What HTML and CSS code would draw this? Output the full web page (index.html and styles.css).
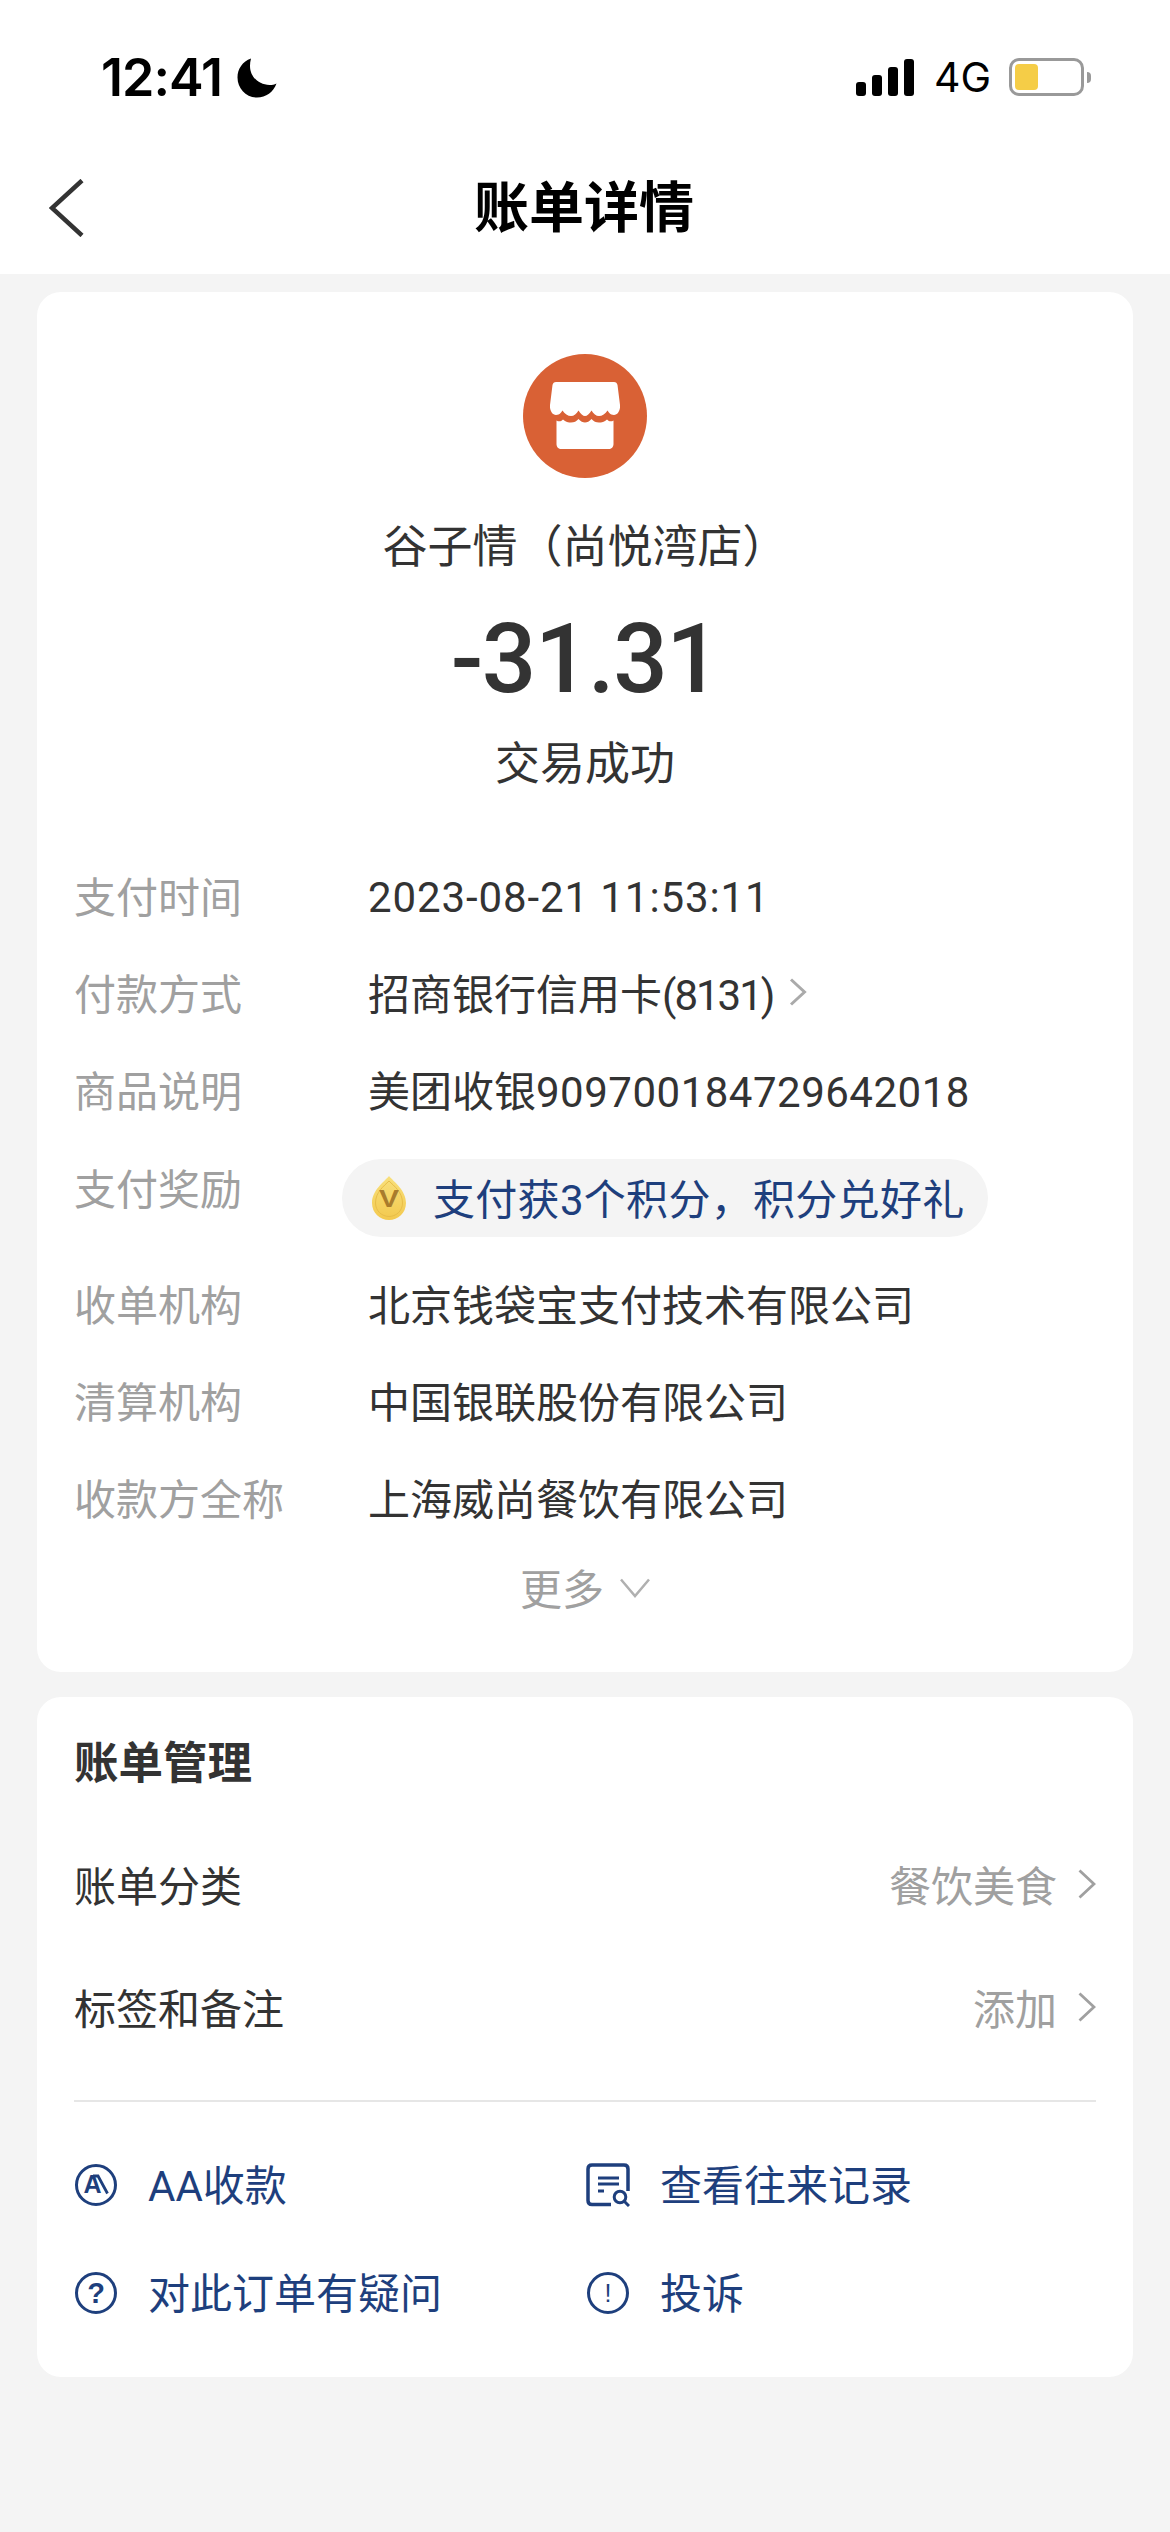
FILE: index.html
```html
<!DOCTYPE html>
<html>

<head>
  <meta charset="UTF-8">
  <meta name="viewport" content="width=device-width, initial-scale=1">
  <title>账单详情</title>

  <link rel="stylesheet" href="styles.css">
</head>

<body>

  <header class="top">
    <div class="status-bar">
      <div class="status-left">
        <span class="clock">12:41</span>
        <svg class="moon" width="40" height="40" viewBox="0 0 40 40">
          <path d="M14 0.5C5.5 3.5 0.5 11 0.5 19.5C0.5 30.5 9 39.5 20 39.5C29 39.5 36.5 34 39.5 25.5C37.5 26.5 35 27 32.5 27C21.5 27 13 18.5 13 8C13 5.5 13.3 3 14 0.5Z" fill="#000" />
        </svg>
      </div>
      <div class="status-right">
        <div class="signal">
          <span class="bar bar-1"></span>
          <span class="bar bar-2"></span>
          <span class="bar bar-3"></span>
          <span class="bar bar-4"></span>
        </div>
        <span class="network">4G</span>
        <div class="battery">
          <div class="battery-level"></div>
        </div>
        <div class="battery-nub"></div>
      </div>
    </div>
    <div class="nav-bar">
      <svg class="back" width="36" height="58" viewBox="0 0 36 58">
        <path d="M33 1.500L3 29L33 56.500" fill="none" stroke="#333" stroke-width="4.500" />
      </svg>
      <h1 class="nav-title">账单详情</h1>
    </div>
  </header>

  <main class="page">
    <section class="card card-detail">
      <div class="store-logo">
        <svg width="70" height="70" viewBox="0 0 70 70">
          <path d="M6 1H64C66 1 67 2 67.500 4L70 24C70.500 29 68 34 64 34C60 34 58.500 31 57.500 29.500C55.500 33 52 35 49 35C46 35 43.500 33 41.500 29.500C39.500 33 37 35 35 35C33 35 30.500 33 28.500 29.500C26.500 33 24 35 21 35C18 35 14.500 33 12.500 29.500C11.500 31 10 34 6 34C2 34 -0.500 29 0 24L2.500 4C3 2 4 1 6 1Z" fill="#fff" />
          <path d="M6.500 39.500C9 41 11 40.500 13 38.500C15.500 41 18.500 41.500 21 41.500C24 41.500 26.500 40.500 28.500 38C30.500 40.500 33 41.500 35 41.500C37 41.500 39.500 40.500 41.500 38C43.500 40.500 46 41.500 49 41.500C51.500 41.500 54.500 41 57 38.500C59 40.500 61 41 63.500 39.500V63C63.500 66 61.500 68 58.500 68H11.500C8.500 68 6.500 66 6.500 63Z" fill="#fff" />
        </svg>
      </div>
      <div class="store-name">谷子情（尚悦湾店）</div>
      <div class="amount">-31.31</div>
      <div class="trade-status">交易成功</div>

      <div class="rows">
        <div class="row">
          <span class="row-label">支付时间</span>
          <span class="row-value row-date">2023-08-21 11:53:11</span>
        </div>
        <div class="row">
          <span class="row-label">付款方式</span>
          <span class="row-value">招商银行信用卡<span class="card-no">(8131)</span></span>
          <svg class="chev-small" width="18" height="28" viewBox="0 0 18 28">
            <path d="M2 1.500L15.500 14L2 26.500" fill="none" stroke="#aaa" stroke-width="3" />
          </svg>
        </div>
        <div class="row">
          <span class="row-label">商品说明</span>
          <span class="row-value">美团收银<span class="order-no">909700184729642018</span></span>
        </div>
        <div class="row row-reward">
          <span class="row-label">支付奖励</span>
          <div class="reward-pill">
            <svg class="coin" width="34" height="44" viewBox="0 0 34 44">
              <defs>
                <linearGradient id="coin-fill" x1="0" y1="0" x2="0" y2="1">
                  <stop offset="0" stop-color="#f8e07c" />
                  <stop offset="1" stop-color="#f3c94e" />
                </linearGradient>
              </defs>
              <path d="M17 0C22 6 34 14 34 27C34 37 26 44 17 44C8 44 0 37 0 27C0 14 12 6 17 0Z" fill="url(#coin-fill)" />
              <path d="M17 5C22 10 30.500 16 30.500 27C30.500 35 24 40.500 17 40.500C10 40.500 3.500 35 3.500 27C3.500 16 12 10 17 5Z" fill="none" stroke="#e8bd48" stroke-width="1" />
              <text class="coin-v" x="17" y="31" text-anchor="middle" textLength="20" lengthAdjust="spacingAndGlyphs">V</text>
            </svg>
            <span class="reward-text">支付获3个积分，积分兑好礼</span>
          </div>
        </div>
        <div class="row">
          <span class="row-label">收单机构</span>
          <span class="row-value">北京钱袋宝支付技术有限公司</span>
        </div>
        <div class="row">
          <span class="row-label">清算机构</span>
          <span class="row-value">中国银联股份有限公司</span>
        </div>
        <div class="row">
          <span class="row-label">收款方全称</span>
          <span class="row-value">上海威尚餐饮有限公司</span>
        </div>
      </div>

      <div class="more">
        <span class="more-text">更多</span>
        <svg width="30" height="20" viewBox="0 0 30 20">
          <path d="M1 1.500L15 18L29 1.500" fill="none" stroke="#b0b0b0" stroke-width="2.500" />
        </svg>
      </div>
    </section>

    <section class="card card-manage">
      <h2 class="manage-title">账单管理</h2>
      <div class="manage-row">
        <span class="manage-label">账单分类</span>
        <span class="manage-value">餐饮美食</span>
        <svg width="18" height="30" viewBox="0 0 18 30">
          <path d="M1.500 1.500L16 15L1.500 28.500" fill="none" stroke="#a0a0a0" stroke-width="2.800" />
        </svg>
      </div>
      <div class="manage-row">
        <span class="manage-label">标签和备注</span>
        <span class="manage-value">添加</span>
        <svg width="18" height="30" viewBox="0 0 18 30">
          <path d="M1.500 1.500L16 15L1.500 28.500" fill="none" stroke="#a0a0a0" stroke-width="2.800" />
        </svg>
      </div>
      <div class="divider"></div>
      <div class="actions">
        <div class="action">
          <svg class="action-icon" width="44" height="44" viewBox="0 0 44 44">
            <circle cx="22" cy="22" r="19.500" fill="none" stroke="#1e3f7d" stroke-width="3" />
            <text class="icon-mark icon-mark-a" x="18.500" y="30" text-anchor="middle">A</text>
            <path d="M19 13H24L33.500 30.500" fill="none" stroke="#1e3f7d" stroke-width="2.800" />
          </svg>
          <span class="action-text">AA收款</span>
        </div>
        <div class="action">
          <svg class="action-icon" width="44" height="44" viewBox="0 0 44 44">
            <path d="M25 41.500H6C3.500 41.500 2 40 2 37.500V6C2 3.500 3.500 2 6 2H38C40.500 2 42 3.500 42 6V28" fill="none" stroke="#1e3f7d" stroke-width="3.500" />
            <path d="M12 15H33M12 21H33M12 28H18" fill="none" stroke="#1e3f7d" stroke-width="3" />
            <circle cx="34" cy="34" r="5.800" fill="#fff" stroke="#1e3f7d" stroke-width="3" />
            <path d="M38.500 38.500L43 43" fill="none" stroke="#1e3f7d" stroke-width="3" />
          </svg>
          <span class="action-text">查看往来记录</span>
        </div>
        <div class="action">
          <svg class="action-icon" width="44" height="44" viewBox="0 0 44 44">
            <circle cx="22" cy="22" r="19.500" fill="none" stroke="#1e3f7d" stroke-width="3" />
            <text class="icon-mark icon-mark-q" x="22" y="32" text-anchor="middle">?</text>
          </svg>
          <span class="action-text">对此订单有疑问</span>
        </div>
        <div class="action">
          <svg class="action-icon" width="44" height="44" viewBox="0 0 44 44">
            <circle cx="22" cy="22" r="19.500" fill="none" stroke="#1e3f7d" stroke-width="3" />
            <text class="icon-mark" x="22" y="31" text-anchor="middle">!</text>
          </svg>
          <span class="action-text">投诉</span>
        </div>
      </div>
    </section>
  </main>

</body>

</html>
```

FILE: styles.css
```css
* {
  box-sizing: border-box;
}

html,
body {
  margin: 0;
  padding: 0;
}

body {
  width: 1170px;
  height: 2532px;
  overflow: hidden;
  background: #f4f4f4;
  color: #333;
  font-family: Roboto, "Noto Sans CJK SC", sans-serif;
  font-size: 42px;
}

.top {
  height: 274px;
  background: #fff;
}

.status-bar {
  height: 155px;
  padding: 58px 79px 0 101px;
  display: flex;
  justify-content: space-between;
  align-items: flex-start;
}

.status-left {
  display: flex;
  align-items: center;
  gap: 15px;
  height: 40px;
}

.clock {
  font-family: Inter, sans-serif;
  font-size: 52px;
  font-weight: 600;
  line-height: 40px;
  color: #000;
  letter-spacing: -1px;
}

.status-right {
  display: flex;
  align-items: center;
  height: 38px;
}

.signal {
  display: flex;
  align-items: flex-end;
  gap: 6px;
  height: 37px;
}

.bar {
  width: 10px;
  background: #000;
  border-radius: 3px;
}

.bar-1 {
  height: 14px;
}

.bar-2 {
  height: 21px;
}

.bar-3 {
  height: 29px;
}

.bar-4 {
  height: 37px;
}

.network {
  margin-left: 20px;
  font-family: Inter, sans-serif;
  font-size: 41px;
  line-height: 38px;
  color: #000;
  width: 75px;
}

.battery {
  width: 75px;
  height: 38px;
  border: 3px solid #999;
  border-radius: 10px;
  padding: 3px;
}

.battery-level {
  width: 23px;
  height: 26px;
  background: #f5cd47;
  border-radius: 4px;
}

.battery-nub {
  width: 4px;
  height: 11px;
  margin-left: 3px;
  background: #999;
  border-radius: 0 4px 4px 0;
}

.nav-bar {
  height: 119px;
  padding: 24px 0 0 49px;
  display: flex;
}

.nav-title {
  margin: -10px 0 0 389px;
  font-size: 55px;
  line-height: 68px;
  height: 68px;
  font-weight: 700;
  color: #000;
  font-family: "Noto Sans CJK SC", sans-serif;
}

.page {
  padding: 18px 37px 0;
  display: flex;
  flex-direction: column;
  gap: 25px;
}

.card {
  background: #fff;
  border-radius: 24px;
}

.card-detail {
  height: 1380px;
  padding-top: 62px;
  display: flex;
  flex-direction: column;
  align-items: center;
}

.store-logo {
  width: 124px;
  height: 124px;
  border-radius: 50%;
  background: #d96135;
  display: flex;
  align-items: center;
  justify-content: center;
}

.store-name {
  margin-top: 36px;
  font-size: 45px;
  line-height: 60px;
  font-family: "Noto Sans CJK SC", sans-serif;
}

.amount {
  margin-top: 30px;
  font-size: 96px;
  line-height: 110px;
  font-weight: 500;
  letter-spacing: -1.500px;
}

.trade-status {
  margin-top: 17px;
  font-size: 45px;
  line-height: 60px;
  font-family: "Noto Sans CJK SC", sans-serif;
}

.rows {
  width: 100%;
  margin-top: 55px;
}

.row {
  height: 97px;
  padding-left: 37px;
  display: flex;
  align-items: center;
}

.row-label {
  width: 294px;
  flex-shrink: 0;
  color: #a0a0a0;
}

.row-value {
  color: #333;
}

.row-date {
  padding-top: 5px;
  letter-spacing: 0.9px;
}

.card-no {
  letter-spacing: -2px;
}

.order-no {
  letter-spacing: 0.5px;
}

.chev-small {
  margin-left: 16px;
}

.row-reward {
  height: 117px;
  align-items: flex-start;
}

.row-reward .row-label {
  line-height: 107px;
}

.reward-pill {
  margin: 22px 0 0 -26px;
  width: 646px;
  height: 78px;
  padding-left: 30px;
  background: #f4f4f4;
  border-radius: 39px;
  display: flex;
  align-items: center;
  gap: 27px;
  flex-shrink: 0;
}

.coin-v {
  font-family: "Liberation Sans", sans-serif;
  font-size: 23px;
  font-weight: 700;
  fill: #a97c2c;
}

.reward-text {
  padding-bottom: 3px;
  color: #1e3f7d;
  letter-spacing: 0.3px;
}

.more {
  height: 86px;
  display: flex;
  align-items: center;
  justify-content: center;
  gap: 16px;
  color: #a0a0a0;
}

.more-text {
  padding-bottom: 3px;
}

.card-manage {
  height: 680px;
  padding: 0 37px;
}

.manage-title {
  margin: 0;
  padding-top: 33px;
  height: 125px;
  font-size: 44.500px;
  line-height: 60px;
  font-weight: 700;
  font-family: "Noto Sans CJK SC", sans-serif;
}

.manage-row {
  height: 123px;
  display: flex;
  align-items: center;
}

.manage-label {
  flex: 1;
}

.manage-value {
  color: #a0a0a0;
  margin-right: 21px;
}

.divider {
  height: 2px;
  margin-top: 32px;
  background: #e6e6e6;
}

.actions {
  margin-top: 29px;
  display: grid;
  grid-template-columns: 512px 1fr;
  grid-auto-rows: 108px;
}

.action {
  display: flex;
  align-items: center;
  gap: 30px;
  color: #1e3f7d;
}

.action-icon {
  flex-shrink: 0;
}

.action-text {
  padding-bottom: 6px;
}

.icon-mark {
  font-family: "Liberation Sans", sans-serif;
  font-size: 25px;
  fill: #1e3f7d;
}

.icon-mark-a {
  font-size: 25px;
  font-weight: 700;
}

.icon-mark-q {
  font-size: 29px;
  font-weight: 700;
}
```
